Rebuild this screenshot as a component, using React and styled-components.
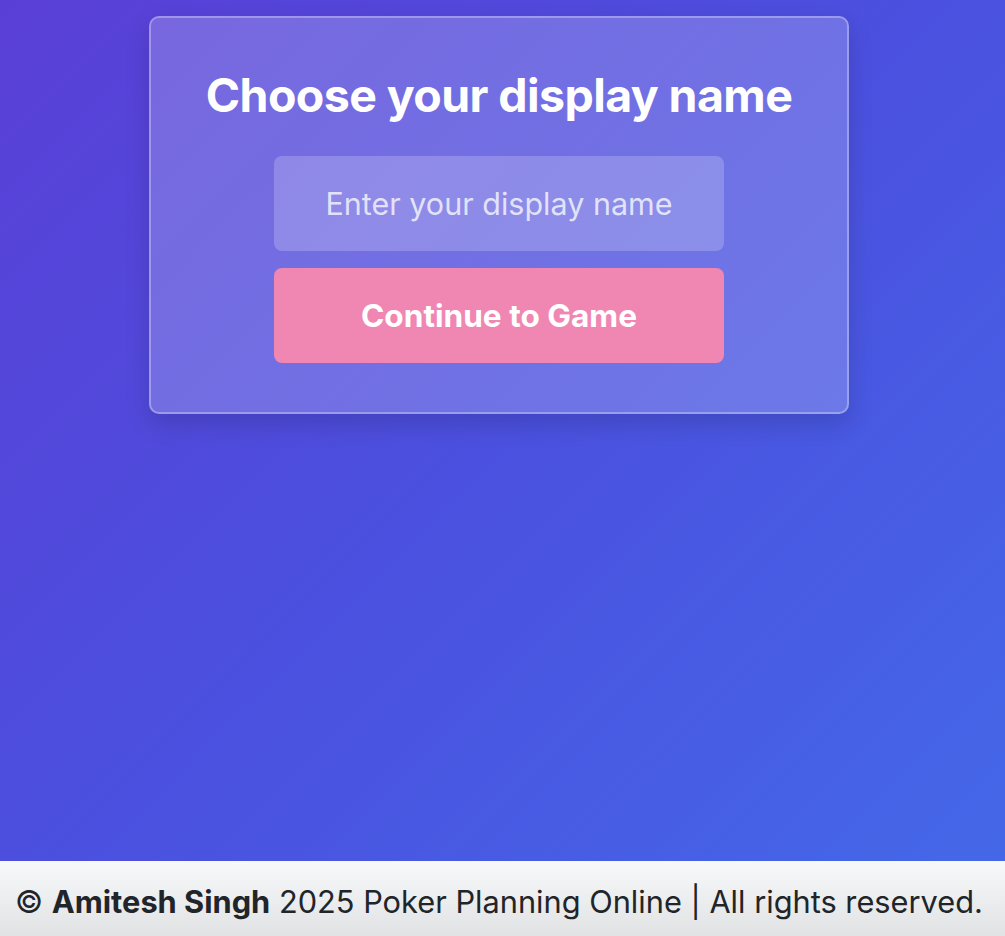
import React from 'react';
import styled, { createGlobalStyle } from 'styled-components';

const GlobalStyle = createGlobalStyle`
  * { box-sizing: border-box; }
  html, body { margin: 0; padding: 0; height: 100%; }
  body {
    font-family: Inter, "Noto Sans", "Liberation Sans", sans-serif;
  }
  #root { height: 100%; }
`;

const Page = styled.div`
  display: flex;
  flex-direction: column;
  min-height: 100vh;
`;

const Main = styled.main`
  flex: 1;
  display: flex;
  justify-content: center;
  align-items: flex-start;
  padding-top: 16px;
  padding-right: 7px;
  background: linear-gradient(135deg, #5a3fd6 0%, #4b50df 50%, #4468e8 100%);
`;

const Card = styled.div`
  width: 700px;
  padding: 48px 0 49px;
  display: flex;
  flex-direction: column;
  align-items: center;
  background: rgba(255, 255, 255, 0.2);
  border: 2px solid rgba(255, 255, 255, 0.3);
  border-radius: 10px;
  box-shadow: 0 10px 25px rgba(0, 0, 0, 0.15);
`;

const Title = styled.h1`
  margin: 0 0 32px;
  font-size: 46.5px;
  line-height: 58px;
  font-weight: 700;
  letter-spacing: -0.6px;
  color: #fff;
  text-align: center;
`;

const NameInput = styled.input`
  width: 450px;
  height: 95px;
  border: none;
  border-radius: 8px;
  background: rgba(255, 255, 255, 0.2);
  color: #fff;
  font-family: inherit;
  font-size: 30.5px;
  text-align: center;
  outline: none;
  &::placeholder {
    color: rgba(255, 255, 255, 0.75);
  }
`;

const Button = styled.button`
  margin-top: 17px;
  width: 450px;
  height: 95px;
  border: none;
  border-radius: 8px;
  background: #f087b3;
  color: #fff;
  font-family: inherit;
  font-size: 31.6px;
  font-weight: 700;
  cursor: pointer;
`;

const Footer = styled.footer`
  height: 75px;
  display: flex;
  align-items: center;
  padding: 5px 15px 0;
  background: linear-gradient(180deg, #f8f9fa 0%, #e1e2e4 100%);
  color: #212529;
  font-size: 30.75px;
  white-space: nowrap;
`;

const Author = styled.strong`
  font-weight: 700;
`;

export default function App() {
  return (
    <>
      <GlobalStyle />
      <Page>
        <Main>
          <Card>
            <Title>Choose your display name</Title>
            <NameInput placeholder="Enter your display name" />
            <Button>Continue to Game</Button>
          </Card>
        </Main>
        <Footer>
          <span>
            © <Author>Amitesh Singh</Author> 2025 Poker Planning Online | All rights reserved.
          </span>
        </Footer>
      </Page>
    </>
  );
}
